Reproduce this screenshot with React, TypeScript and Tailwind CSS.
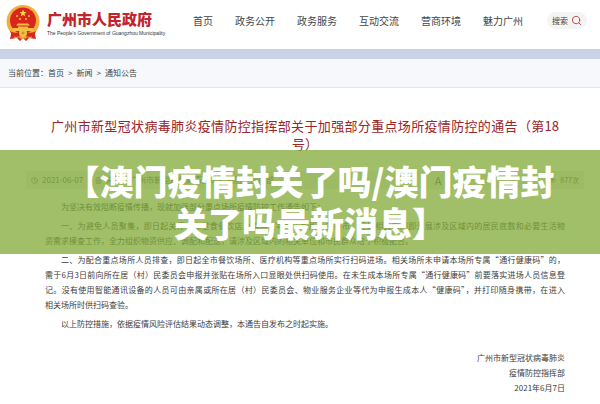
import { Clock, Eye, FileText, Search } from "lucide-react";

const navItems = ["首页", "政务公开", "政务服务", "互动交流", "营商环境", "魅力广州"];

interface Line {
  text: string;
  indent?: boolean;
  full?: boolean;
}

const paragraphs: Line[][] = [
  [{ text: "为坚决有效阻断疫情传播，现就加强部分重点场所疫情防控工作通告如下：", indent: true }],
  [
    { text: "一、为避免人员聚集，即日起关停全市堂食餐饮店及棋牌室等娱乐场所，由各市、区级相关部门即开展涉及区域内的居民底数和必要生活物", indent: true, full: true },
    { text: "资需求摸查工作，全力组织物资供应、调配和配送，请涉及区域内的相关单位和市民群众给予积极配合。" },
  ],
  [
    { text: "二、为配合重点场所人员排查，即日起全市餐饮场所、医疗机构等重点场所实行扫码进场。相关场所未申请本场所专属“通行健康码”的，", indent: true, full: true },
    { text: "需于6月3日前向所在居（村）民委员会申报并张贴在场所入口显眼处供扫码使用。在未生成本场所专属“通行健康码”前要落实进场人员信息登", full: true },
    { text: "记。没有使用智能通讯设备的人员可由亲属或所在居（村）民委员会、物业服务企业等代为申报生成本人“健康码”，并打印随身携带，在进入", full: true },
    { text: "相关场所时供扫码查验。" },
  ],
  [{ text: "以上防控措施，依据疫情风险评估结果动态调整，本通告自发布之时起实施。", indent: true }],
];

function Emblem() {
  return (
    <svg viewBox="0 0 34 37" className="h-[37px] w-[34px] shrink-0" aria-hidden="true">
      <path d="M6 25 L4 34 L11 33 L14 36 L17 33 L20 36 L23 33 L30 34 L28 25 Z" fill="#d7291d" />
      <circle cx="17" cy="16.5" r="16.5" fill="#f0b040" />
      <circle cx="17" cy="15.5" r="13" fill="#d9261c" />
      <path d="M17 4.5l1 2.4 2.6.2-2 1.7.6 2.5-2.2-1.4-2.2 1.4.6-2.5-2-1.7 2.6-.2z" fill="#f9d24a" />
      <g fill="#f5bd42">
        <circle cx="11" cy="11" r="1" />
        <circle cx="14" cy="14" r="1" />
        <circle cx="20" cy="14" r="1" />
        <circle cx="23" cy="11" r="1" />
        <path d="M12 18.5h10l2 2H10zM12 21.5h10v2H12zM6 23h22l-2 3H8z" />
      </g>
      <path d="M4 26c4 3 9 1 13 1s9 2 13-1l-2 5c-4 2-7 0-11 0s-7 2-11 0z" fill="#d7291d" />
      <circle cx="17" cy="28" r="4" fill="#f3bf45" />
      <circle cx="17" cy="28" r="1.5" fill="#e08a2c" />
      <path d="M8 32l4 1M22 33l4-1M14 33h6" stroke="#f0b73c" strokeWidth="1" />
    </svg>
  );
}

function Header() {
  return (
    <header className="flex h-[59px] items-start border-b-10 border-[#c8d3e8] bg-white pl-[6px]">
      <div className="flex gap-[7px] pt-[5px]">
        <Emblem />
        <div className="w-[112px] whitespace-nowrap">
          <div className="mt-1 text-[15px] leading-[20px] font-black text-[#c3242b]">广州市人民政府</div>
          <div className="font-['Liberation_Sans',sans-serif] text-[5px] leading-[8px] text-[#333]">
            The People's Government of Guangzhou Municipality
          </div>
        </div>
      </div>
      <nav className="ml-[34px] flex h-[41px] items-center gap-[22px] text-[10px] whitespace-nowrap text-[#444]">
        {navItems.map((item) => (
          <a key={item} href="#">{item}</a>
        ))}
      </nav>
      <button className="mt-3 mr-[13px] ml-auto flex h-[17px] items-center gap-[3px] rounded-full bg-[#f4f4f5] px-[5px] text-[8px] whitespace-nowrap text-[#444]">
        搜索
        <Search size={11} color="#b5443c" />
      </button>
    </header>
  );
}

export default function App() {
  return (
    <div className="relative min-h-screen overflow-hidden bg-white font-['Noto_Sans_CJK_SC',sans-serif]" lang="zh-CN">
      <Header />
      <div className="flex h-[29px] items-center gap-1 border-b border-[#e2e5e9] bg-[#f6f8fb] pl-2 text-[8px] whitespace-nowrap text-[#444]">
        <span>
          当前位置：<a href="#">首页</a>
        </span>
        <span>&gt;</span>
        <a href="#">新闻</a>
        <span>&gt;</span>
        <span>通知公告</span>
      </div>

      <main className="pr-4 pl-[26px]">
        <h1 className="mx-[25px] mt-[29px] text-center text-[13px] leading-[18px] whitespace-nowrap text-[#9c2426]">
          <span className="block [text-align-last:justify]">广州市新型冠状病毒肺炎疫情防控指挥部关于加强部分重点场所疫情防控的通告（第18</span>
          <span className="block">号）</span>
        </h1>

        <div className="mt-[18px] flex h-[18px] items-center gap-1 bg-[#f0f0f0] px-[5px] text-[8px] whitespace-nowrap text-[#555]">
          <Clock size={7} />
          <span>2021-06-07</span>
          <FileText size={7} className="ml-2" />
          <span>来源：广州市新型冠状病毒肺炎疫情防控指挥部</span>
          <span className="ml-auto text-[11px]">A</span>
          <span className="mr-[94px]">A</span>
          <Eye size={8} />
          <span className="text-[7px]">877次</span>
        </div>

        <article className="mr-[19px] ml-[19px] mt-[10px] text-[8px] leading-[15px] whitespace-nowrap text-[#3c3c3c]">
          {paragraphs.map((lines, i) => (
            <p key={i} className="mb-1">
              {lines.map((line) => (
                <span
                  key={line.text}
                  className={`block ${line.indent ? "pl-4" : ""} ${line.full ? "[text-align-last:justify]" : ""}`}
                >
                  {line.text}
                </span>
              ))}
            </p>
          ))}
          <div className="mt-[19px] text-right">
            <p>广州市新型冠状病毒肺炎</p>
            <p>疫情防控指挥部</p>
            <p>2021年6月7日</p>
          </div>
        </article>
      </main>

      <div className="absolute inset-x-0 top-[150px] flex h-[104px] items-center justify-center bg-[#81aa37]/75 pl-5">
        <h2 className="text-center text-[34px] leading-[42px] font-black whitespace-nowrap text-white">
          【澳门疫情封关了吗/澳门疫情封
          <br />
          关了吗最新消息】
        </h2>
      </div>
    </div>
  );
}
